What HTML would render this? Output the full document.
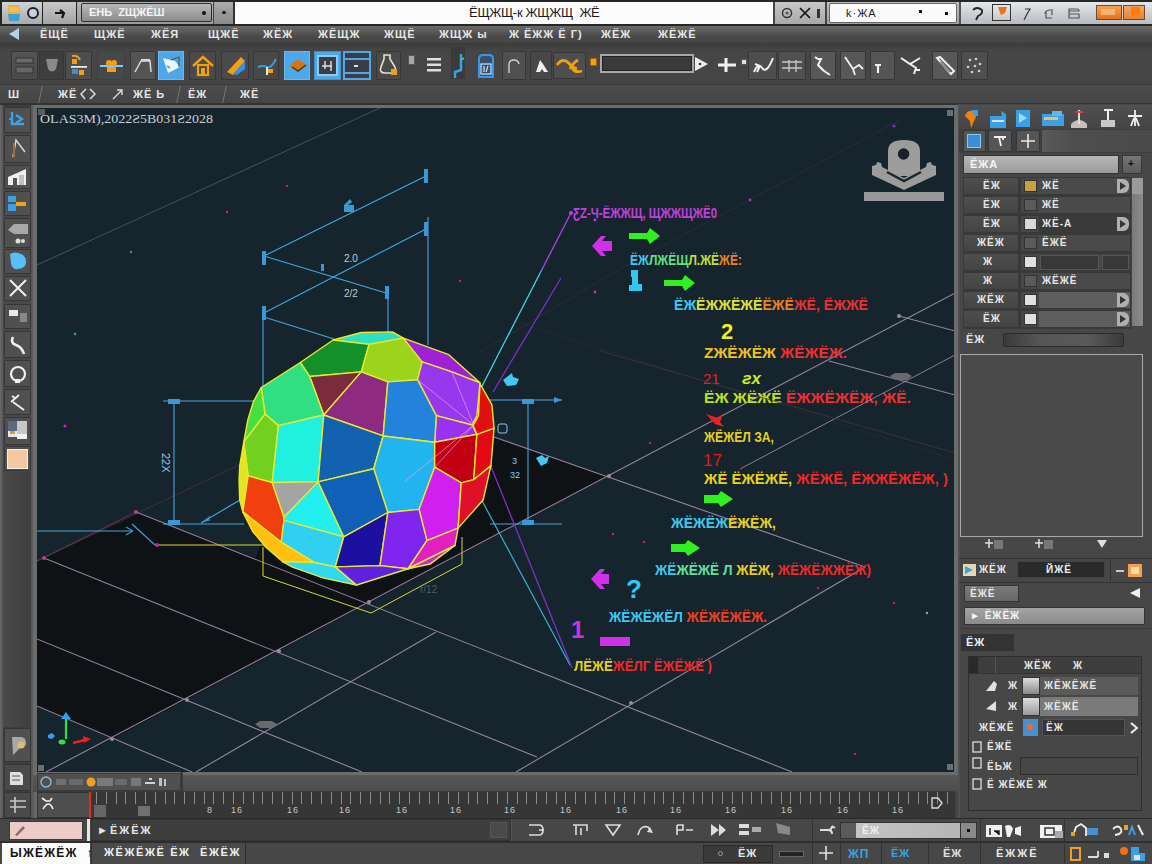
<!DOCTYPE html>
<html><head><meta charset="utf-8">
<style>
*{margin:0;padding:0;box-sizing:border-box}
html,body{width:1152px;height:864px;overflow:hidden;background:#444;font-family:"Liberation Sans",sans-serif;position:relative}
.a{position:absolute}
.t{position:absolute;color:#e6e6e6;font-size:11px;font-weight:bold;white-space:nowrap;line-height:1;letter-spacing:1px;font-family:"Liberation Sans",sans-serif}
.btn{position:absolute;background:linear-gradient(#555,#4a4a4a);border:1px solid #363636;border-radius:1px}
.ic{position:absolute;overflow:visible}
</style></head><body>
<!-- TOP BAR -->
<div class="a" style="left:0;top:0;width:1152px;height:26px;background:#262626"></div>
<div class="a" style="left:2px;top:2px;width:40px;height:22px;background:linear-gradient(#d0d4d8,#a8aaac)"></div>
<svg class="ic" style="left:6px;top:3px" width="16" height="20"><path d="M2,2 h11 l1,9 h-12z" fill="#e8b040"/><path d="M2,11 h12 l-1,7 h-10z" fill="#3aa0d8"/><path d="M3,4 h9 v5 h-9z" fill="#f0c860" opacity=".7"/></svg>
<svg class="ic" style="left:26px;top:6px" width="14" height="14"><circle cx="7" cy="7" r="5" fill="#c8d0d8" stroke="#1a2030" stroke-width="2"/></svg>
<div class="a" style="left:42px;top:2px;width:1px;height:22px;background:#222"></div>
<div class="a" style="left:43px;top:2px;width:33px;height:22px;background:linear-gradient(#c8c8c8,#a4a4a4)"></div>
<svg class="ic" style="left:53px;top:8px" width="14" height="12"><path d="M2,5 h8 M7,2 l4,3 l-2,5" stroke="#151515" stroke-width="2.2" fill="none"/></svg>
<div class="a" style="left:76px;top:2px;width:1px;height:22px;background:#222"></div>
<div class="a" style="left:77px;top:2px;width:156px;height:22px;background:linear-gradient(#b4b4b4,#9a9a9a)"></div>
<div class="a" style="left:81px;top:3px;width:131px;height:19px;background:linear-gradient(#b8b8b8,#8c8c8c);border:1.5px solid #2e2e2e;border-radius:2px"></div>
<div class="t" style="left:89px;top:7px;color:#f4f4f4;font-size:11px;letter-spacing:0px">ЕНЬ &nbsp;ZЩЖЁШ</div>
<div class="a" style="left:202px;top:11px;width:4px;height:4px;border-radius:2px;background:#111"></div>
<div class="a" style="left:213px;top:2px;width:20px;height:22px;background:linear-gradient(#aaa,#8a8a8a);border-left:1px solid #444"></div>
<div class="a" style="left:222px;top:11px;width:4px;height:3px;border-radius:2px;background:#111"></div>
<div class="a" style="left:233px;top:2px;width:2px;height:22px;background:#333"></div>
<div class="a" style="left:235px;top:2px;width:538px;height:22px;background:#fcfcfc"></div>
<div class="t" style="left:469px;top:6px;color:#1a1a1a;font-size:13px;font-weight:normal;letter-spacing:-0.3px">ЁЩЖЩ-к ЖЩЖЩ &nbsp;ЖЁ</div>
<div class="a" style="left:773px;top:2px;width:2px;height:22px;background:#444"></div>
<div class="a" style="left:775px;top:2px;width:50px;height:22px;background:linear-gradient(#c8c8c8,#a8a8a8)"></div>
<svg class="ic" style="left:781px;top:7px" width="50" height="14"><circle cx="6" cy="6" r="4.5" fill="none" stroke="#333" stroke-width="1.5"/><circle cx="6" cy="6" r="1.5" fill="#555"/><path d="M19,1 l10,10 M29,1 l-10,10" stroke="#111" stroke-width="1.6"/><rect x="36" y="2" width="3" height="9" fill="#333"/></svg>
<div class="a" style="left:825px;top:2px;width:2px;height:22px;background:#444"></div>
<div class="a" style="left:827px;top:2px;width:133px;height:22px;background:linear-gradient(#c0c0c0,#a0a0a0)"></div>
<div class="a" style="left:829px;top:3px;width:128px;height:20px;background:#fafafa;border:1px solid #666;border-radius:2px"></div>
<div class="t" style="left:846px;top:8px;color:#222;font-size:11px;font-weight:normal">k·ЖА</div>
<div class="a" style="left:919px;top:10px;width:3px;height:3px;background:#111"></div>
<div class="a" style="left:945px;top:12px;width:3px;height:3px;background:#111"></div>
<div class="a" style="left:959px;top:2px;width:2px;height:22px;background:#555"></div>
<div class="a" style="left:961px;top:2px;width:191px;height:22px;background:linear-gradient(#e4e8ec,#b8bcc0)"></div>
<svg class="ic" style="left:970px;top:6px" width="16" height="16"><path d="M3,4 q4,-4 9,0 q1,4 -4,6 l-2,4" stroke="#222" stroke-width="1.8" fill="none"/></svg>
<div class="a" style="left:992px;top:4px;width:19px;height:17px;background:linear-gradient(#e8e8e8,#c8c8c8);border:1px solid #333"></div>
<svg class="ic" style="left:997px;top:6px" width="12" height="10"><path d="M1,1 h9 l-2,6 l-4,2z" fill="#f07010"/></svg>
<svg class="ic" style="left:1022px;top:6px" width="64" height="16"><path d="M3,3 h5 l-3,5 l-3,6" stroke="#333" stroke-width="1.2" fill="none"/><path d="M23,8 q0,-4 6,-4 M24,5 v7 h6 M30,3 v6" stroke="#555" stroke-width="1.2" fill="none"/><path d="M47,3 h8 q2,0 2,2 h-10 v3 h10 v4 h-10z" stroke="#555" stroke-width="1.2" fill="none"/></svg>
<div class="a" style="left:1096px;top:5px;width:26px;height:15px;background:linear-gradient(#f8a050,#e87018);border:1px solid #6a4a30"></div>
<div class="a" style="left:1101px;top:9px;width:14px;height:6px;background:#f8d0a0;opacity:.6"></div>
<div class="a" style="left:1123px;top:5px;width:22px;height:15px;background:linear-gradient(#f0a868,#e88030);border:1px solid #6a4a30"></div>
<div class="a" style="left:1131px;top:7px;width:9px;height:8px;background:#ff7a10"></div>
<!-- MENU -->
<div class="a" style="left:0;top:24px;width:1152px;height:2px;background:#262626"></div>
<div class="a" style="left:0;top:26px;width:1152px;height:17px;background:linear-gradient(#6a6a6a,#4a4a4a 60%,#444)"></div>
<svg class="ic" style="left:7px;top:27px" width="14" height="14"><path d="M12,1 L2,7 L12,13z" fill="#b8d0e8"/></svg>
<div class="t" style="left:40px;top:29px">ЁЩЁ</div>
<div class="t" style="left:94px;top:29px">ЩЖЁ</div>
<div class="t" style="left:151px;top:29px">ЖЁЯ</div>
<div class="t" style="left:208px;top:29px">ЩЖЁ</div>
<div class="t" style="left:263px;top:29px">ЖЁЖ</div>
<div class="t" style="left:318px;top:29px">ЖЁЩЖ</div>
<div class="t" style="left:384px;top:29px">ЖЩЁ</div>
<div class="t" style="left:439px;top:29px">ЖЩЖ ы</div>
<div class="t" style="left:509px;top:29px">Ж ЁЖЖ Ё Г)</div>
<div class="t" style="left:601px;top:29px">ЖЁЖ</div>
<div class="t" style="left:658px;top:29px">ЖЁЖЁ</div>
<!-- TOOLBAR -->
<div class="a" style="left:0;top:43px;width:1152px;height:41px;background:linear-gradient(#3c3c3c,#464646 20%,#454545)"></div>
<!-- toolbar buttons -->
<div class="btn" style="left:11px;top:51px;width:27px;height:29px;background:linear-gradient(#555,#4a4a4a)"></div>
<svg class="ic" style="left:15px;top:57px" width="20" height="18"><rect x="1" y="1" width="17" height="5" fill="#6a6a6a" stroke="#333"/><rect x="1" y="10" width="17" height="6" fill="#666" stroke="#333"/></svg>
<div class="btn" style="left:39px;top:51px;width:25px;height:29px;background:#3e3e3e"></div>
<svg class="ic" style="left:45px;top:57px" width="14" height="18"><path d="M1,2 h12 l-2,10 q-4,5 -8,0z" fill="#8a8a8a"/></svg>
<div class="btn" style="left:65px;top:51px;width:27px;height:29px;background:#4e4e4e"></div>
<svg class="ic" style="left:68px;top:54px" width="22" height="24"><path d="M4,2 q6,-1 8,4" stroke="#e8a020" stroke-width="2" fill="none"/><rect x="3" y="12" width="16" height="1.8" fill="#e8e8e8"/><rect x="4" y="15" width="6" height="5" fill="#3a90d0"/><rect x="11" y="16" width="5" height="5" fill="#f0a010"/><rect x="4" y="5" width="5" height="5" fill="#f0a010"/></svg>
<div class="btn" style="left:97px;top:51px;width:28px;height:29px;background:#484848;border-color:#404040"></div>
<svg class="ic" style="left:99px;top:58px" width="26" height="18"><rect x="1" y="7" width="23" height="2" fill="#8ac8f0"/><circle cx="10" cy="5" r="3" fill="#f0a010"/><circle cx="15" cy="5" r="3" fill="#f0a010"/><rect x="8" y="9" width="9" height="5" fill="#f0a010"/></svg>
<div class="btn" style="left:130px;top:51px;width:26px;height:29px;background:#545454"></div>
<svg class="ic" style="left:133px;top:57px" width="22" height="18"><path d="M2,15 l6,-11 h9 l1,11" stroke="#d8d8d8" stroke-width="1.5" fill="none"/><rect x="8" y="2" width="9" height="2" fill="#d8d8d8"/></svg>
<div class="a" style="left:158px;top:51px;width:26px;height:29px;background:#4ca8e8;border:1px solid #6ab8f0"></div>
<svg class="ic" style="left:161px;top:54px" width="22" height="24"><path d="M2,4 l12,3 l5,6 l-12,6z" fill="#f0f4f8"/><path d="M10,6 l8,-3 v10" stroke="#555" stroke-width="1.2" fill="none"/><path d="M6,12 l3,2" stroke="#4ca8e8" stroke-width="2"/></svg>
<div class="btn" style="left:189px;top:51px;width:27px;height:29px;background:#4a4a4a"></div>
<svg class="ic" style="left:191px;top:54px" width="24" height="24"><path d="M2,12 l10,-9 l10,9" stroke="#f0a010" stroke-width="2.5" fill="none"/><rect x="7" y="11" width="10" height="10" fill="none" stroke="#f0a010" stroke-width="2.2"/><rect x="10" y="14" width="4" height="7" fill="#f0a010"/></svg>
<div class="btn" style="left:221px;top:51px;width:28px;height:29px;background:#4a4a4a"></div>
<svg class="ic" style="left:224px;top:54px" width="24" height="24"><path d="M3,18 l14,-15 l4,4 l-12,14z" fill="#f0a010"/><path d="M9,20 l12,-13 v8 l-8,6z" fill="#3a90e0"/></svg>
<div class="btn" style="left:253px;top:51px;width:26px;height:29px;background:#484848"></div>
<svg class="ic" style="left:255px;top:55px" width="24" height="22"><path d="M3,12 q6,-2 9,0 q4,2 9,-8" stroke="#3a98e0" stroke-width="2" fill="none"/><rect x="11" y="12" width="2" height="8" fill="#e8e8e8"/><rect x="13" y="14" width="5" height="4" fill="#f0a010"/></svg>
<div class="a" style="left:284px;top:51px;width:26px;height:29px;background:#4ca8e8;border:1px solid #6ab8f0"></div>
<svg class="ic" style="left:287px;top:56px" width="22" height="20"><path d="M2,10 l9,-7 l9,6 l-9,7z" fill="#d07818"/><path d="M5,11 l6,4 l8,-6" stroke="#5a3010" stroke-width="1.5" fill="none"/></svg>
<div class="a" style="left:314px;top:51px;width:27px;height:29px;background:#4ca8e8;border:1px solid #3a90d0"></div>
<div class="a" style="left:317px;top:55px;width:21px;height:21px;background:#3a3e44;border:2px solid #90c8f0"></div>
<svg class="ic" style="left:320px;top:58px" width="16" height="16"><path d="M2,8 h10 M5,3 v8 M11,3 v10" stroke="#e0e0e0" stroke-width="1.4"/></svg>
<div class="a" style="left:343px;top:51px;width:28px;height:29px;background:#3a3e44;border:2px solid #4ca8e8"></div>
<div class="a" style="left:343px;top:58px;width:28px;height:2px;background:#4ca8e8"></div>
<div class="a" style="left:343px;top:72px;width:28px;height:2px;background:#4ca8e8"></div>
<div class="a" style="left:354px;top:65px;width:4px;height:2px;background:#e0e0e0"></div>
<div class="btn" style="left:376px;top:51px;width:25px;height:29px;background:#4a4a4a"></div>
<svg class="ic" style="left:378px;top:53px" width="22" height="26"><path d="M6,2 h6 v4 l5,8 q2,6 -4,6 h-6 q-6,0 -4,-6 l3,-8z" stroke="#e8e0c8" stroke-width="1.6" fill="none"/><rect x="13" y="16" width="6" height="6" fill="#e8a020"/></svg>
<div class="a" style="left:408px;top:55px;width:7px;height:10px;background:#a8a8a8;border:1px solid #555;border-radius:1px"></div>
<svg class="ic" style="left:426px;top:56px" width="18" height="18"><rect x="1" y="2" width="14" height="2.5" fill="#e0e0e0"/><rect x="1" y="7.5" width="14" height="2.5" fill="#e0e0e0"/><rect x="1" y="13" width="14" height="2.5" fill="#e0e0e0"/></svg>
<div class="a" style="left:451px;top:47px;width:14px;height:32px;background:#3a3a3a"></div>
<svg class="ic" style="left:451px;top:50px" width="16" height="30"><path d="M10,4 v16 l-6,2 v6" stroke="#3aa0e8" stroke-width="2.5" fill="none"/><path d="M10,10 l3,-2" stroke="#50d050" stroke-width="2"/></svg>
<svg class="ic" style="left:477px;top:53px" width="18" height="26"><path d="M2,24 v-18 q0,-4 4,-4 h6 q4,0 4,4 v18z" fill="#3a5068" stroke="#3a98e8" stroke-width="2"/><rect x="4" y="11" width="10" height="10" fill="none" stroke="#a8d8f8" stroke-width="1.4"/><path d="M7,13 v6 M11,13 l-2,6" stroke="#c8e8f8" stroke-width="1.2"/></svg>
<div class="btn" style="left:502px;top:51px;width:24px;height:29px;background:#505050"></div>
<svg class="ic" style="left:505px;top:57px" width="18" height="18"><path d="M4,16 v-8 q0,-5 5,-5 q4,0 5,4" stroke="#d0d0d0" stroke-width="1.4" fill="none"/></svg>
<div class="btn" style="left:530px;top:51px;width:22px;height:29px;background:#484848"></div>
<svg class="ic" style="left:533px;top:57px" width="18" height="18"><path d="M3,15 l4,-12 l3,4 l5,8 h-4 l-2,-3 l-2,3z" fill="#f0f0f0"/></svg>
<div class="btn" style="left:553px;top:52px;width:33px;height:27px;background:#4e4e4e"></div>
<svg class="ic" style="left:555px;top:56px" width="30" height="20"><path d="M2,9 q4,-6 9,-4 q5,3 7,8 q2,4 9,2 M15,13 q3,-6 8,-9 M16,10 l6,3" stroke="#f0a010" stroke-width="2.8" fill="none"/></svg>
<div class="a" style="left:590px;top:58px;width:7px;height:8px;background:#f0a010;border:1px solid #a06010"></div>
<div class="a" style="left:600px;top:54px;width:94px;height:19px;background:#3a3a3a;border:2px solid #a8a8a8;box-shadow:inset 0 0 0 1px #222"></div>
<svg class="ic" style="left:694px;top:56px" width="16" height="16"><path d="M1,1 L14,8 L1,15z" fill="#f0f0f0"/><circle cx="6" cy="8" r="1.3" fill="#333"/></svg>
<svg class="ic" style="left:717px;top:57px" width="20" height="16"><path d="M1,8 h18 M9,1 v14" stroke="#f0f0f0" stroke-width="3"/></svg>
<div class="a" style="left:741px;top:59px;width:6px;height:6px;background:#e0e0e0;border:1px solid #555"></div>
<div class="btn" style="left:748px;top:51px;width:29px;height:29px;background:#4e4e4e"></div>
<svg class="ic" style="left:751px;top:56px" width="24" height="20"><path d="M3,16 q4,-10 9,-3 q4,4 10,-11 M4,8 l5,2 l-3,6" stroke="#f0f0f0" stroke-width="2" fill="none"/></svg>
<div class="btn" style="left:778px;top:51px;width:28px;height:29px;background:#505050"></div>
<svg class="ic" style="left:781px;top:59px" width="22" height="14"><path d="M1,3 h20 M1,9 h20 M8,1 v12 M15,1 v12" stroke="#c8c8c8" stroke-width="1.3"/></svg>
<div class="btn" style="left:810px;top:51px;width:26px;height:29px;background:#585858"></div>
<svg class="ic" style="left:812px;top:54px" width="22" height="24"><path d="M3,3 l3,2 l3,0 l-3,6 q5,6 12,10" stroke="#f0f0f0" stroke-width="2" fill="none"/></svg>
<div class="btn" style="left:840px;top:51px;width:26px;height:29px;background:#585858"></div>
<svg class="ic" style="left:842px;top:54px" width="22" height="24"><path d="M3,3 l8,12 l2,6 M11,15 l6,-4 l4,4" stroke="#f0f0f0" stroke-width="1.8" fill="none"/></svg>
<div class="btn" style="left:870px;top:51px;width:25px;height:29px;background:#555"></div>
<svg class="ic" style="left:872px;top:59px" width="22" height="18"><path d="M3,6 h6 M6,6 v8" stroke="#f0f0f0" stroke-width="2.2"/></svg>
<svg class="ic" style="left:899px;top:54px" width="26" height="24"><path d="M2,4 l9,6 l10,-6 M11,10 l6,4 l-2,6 M16,16 l5,0" stroke="#f0f0f0" stroke-width="2" fill="none"/></svg>
<div class="btn" style="left:932px;top:51px;width:26px;height:29px;background:#585858"></div>
<svg class="ic" style="left:934px;top:54px" width="24" height="24"><path d="M3,4 l3,-1 l14,14 l-3,3z" fill="none" stroke="#f0f0f0" stroke-width="2"/><path d="M6,8 l10,10" stroke="#888" stroke-width="2"/></svg>
<div class="btn" style="left:961px;top:51px;width:27px;height:29px;background:#4e4e4e"></div>
<svg class="ic" style="left:964px;top:56px" width="22" height="20"><g fill="#d0d0d0"><circle cx="6" cy="4" r="1.3"/><circle cx="12" cy="3" r="1.3"/><circle cx="16" cy="8" r="1.3"/><circle cx="4" cy="11" r="1.3"/><circle cx="11" cy="10" r="1.3"/><circle cx="8" cy="16" r="1.3"/><circle cx="15" cy="15" r="1.3"/></g></svg>
<!-- sub bar -->
<div class="a" style="left:0;top:84px;width:1152px;height:20px;background:linear-gradient(#4c4c4c,#444)"></div>
<div class="a" style="left:0;top:84px;width:1152px;height:1px;background:#3a3a3a"></div>
<div class="t" style="left:8px;top:89px">Ш</div>
<div class="a" style="left:40px;top:86px;width:1px;height:17px;background:#777;transform:skewX(-12deg)"></div>
<div class="t" style="left:58px;top:89px">ЖЁ</div>
<svg class="ic" style="left:80px;top:88px" width="16" height="12"><path d="M6,1 l-5,5 l4,5 M10,1 l5,5 l-5,5" stroke="#ddd" stroke-width="1.5" fill="none"/></svg>
<svg class="ic" style="left:112px;top:88px" width="12" height="12"><path d="M1,11 l9,-9 M5,2 h5 v5" stroke="#ddd" stroke-width="1.4" fill="none"/></svg>
<div class="t" style="left:133px;top:89px">ЖЁ Ь</div>
<div class="a" style="left:178px;top:86px;width:1px;height:17px;background:#777;transform:skewX(-12deg)"></div>
<div class="t" style="left:188px;top:89px">ЁЖ</div>
<div class="a" style="left:224px;top:86px;width:1px;height:17px;background:#777;transform:skewX(-12deg)"></div>
<div class="t" style="left:240px;top:89px">ЖЁ</div>
<div class="a" style="left:0;top:103px;width:1152px;height:2px;background:#333"></div>
<div class="a" style="left:0;top:105px;width:1152px;height:3px;background:#5a5a5a"></div>
<div class="a" style="left:0;top:108px;width:1152px;height:1px;background:#3a3a3a"></div>
<!-- LEFT TOOLBAR -->
<div class="a" style="left:0;top:105px;width:37px;height:715px;background:#3e3e3e"></div>
<div class="a" style="left:0;top:105px;width:3px;height:715px;background:linear-gradient(90deg,#6a6a6a,#555)"></div>
<div class="a" style="left:31px;top:105px;width:6px;height:715px;background:linear-gradient(90deg,#555,#6e6e6e)"></div>
<div class="a" style="left:3px;top:107px;width:28px;height:365px;background:#484848"></div>
<div class="a" style="left:3px;top:472px;width:28px;height:255px;background:linear-gradient(90deg,#4a4a4a,#3e3e3e)"></div>
<!-- buttons -->
<div class="btn" style="left:4px;top:107px;width:27px;height:26px;background:#505050"></div>
<svg class="ic" style="left:8px;top:110px" width="20" height="20"><path d="M4,2 v12 h12 M8,5 l6,4 l-6,4" stroke="#3aa0e8" stroke-width="2.4" fill="none"/><rect x="1" y="8" width="4" height="2" fill="#3aa0e8"/></svg>
<div class="btn" style="left:4px;top:135px;width:27px;height:28px;background:#505050"></div>
<svg class="ic" style="left:8px;top:137px" width="20" height="24"><path d="M5,20 l3,-17 l9,12" stroke="#d8d8d8" stroke-width="1.5" fill="none"/><path d="M6,6 v14" stroke="#a07040" stroke-width="2"/></svg>
<div class="btn" style="left:4px;top:165px;width:27px;height:24px;background:#505050"></div>
<svg class="ic" style="left:7px;top:167px" width="22" height="20"><path d="M1,10 l18,-8 v16 h-18z" fill="#f0f0f0"/><path d="M6,11 h4 v7 h-4z" fill="#555"/><path d="M12,8 h5 v10 h-5z" fill="#c0c0c0"/></svg>
<div class="btn" style="left:4px;top:191px;width:27px;height:25px;background:#505050"></div>
<svg class="ic" style="left:7px;top:194px" width="22" height="20"><rect x="1" y="2" width="8" height="6" fill="#3aa0e8"/><rect x="1" y="10" width="8" height="7" fill="#3aa0e8"/><rect x="9" y="8" width="10" height="4" fill="#f0a010"/></svg>
<div class="btn" style="left:4px;top:218px;width:27px;height:30px;background:#505050"></div>
<svg class="ic" style="left:6px;top:220px" width="24" height="26"><path d="M2,10 l6,-6 h14 v10 h-14z" fill="#a8a8a8"/><circle cx="12" cy="21" r="2.5" fill="#e0e0e0"/><circle cx="17" cy="21" r="2" fill="#e0e0e0"/></svg>
<div class="btn" style="left:4px;top:249px;width:27px;height:25px;background:#505050"></div>
<svg class="ic" style="left:7px;top:250px" width="22" height="22"><path d="M3,4 q5,-3 11,0 q5,2 5,8 q0,6 -8,7 q-6,1 -7,-6z" fill="#58c0f8"/></svg>
<div class="btn" style="left:4px;top:276px;width:27px;height:25px;background:#505050"></div>
<svg class="ic" style="left:8px;top:278px" width="20" height="20"><path d="M2,2 l16,16 M18,2 l-16,16" stroke="#f0f0f0" stroke-width="2"/></svg>
<div class="btn" style="left:4px;top:304px;width:27px;height:25px;background:#505050"></div>
<svg class="ic" style="left:7px;top:307px" width="22" height="20"><rect x="2" y="3" width="9" height="6" fill="#e8e8e8"/><rect x="13" y="6" width="7" height="9" fill="#888"/></svg>
<div class="btn" style="left:4px;top:331px;width:27px;height:27px;background:#505050"></div>
<svg class="ic" style="left:7px;top:333px" width="22" height="24"><path d="M6,4 q-3,6 3,8 q6,2 8,9" stroke="#f0f0f0" stroke-width="2.6" fill="none"/></svg>
<div class="btn" style="left:4px;top:360px;width:27px;height:27px;background:#505050"></div>
<svg class="ic" style="left:7px;top:362px" width="22" height="24"><circle cx="11" cy="12" r="7" stroke="#f0f0f0" stroke-width="2.2" fill="none"/><rect x="8" y="17" width="5" height="4" fill="#f0f0f0"/></svg>
<div class="btn" style="left:4px;top:389px;width:27px;height:26px;background:#505050"></div>
<svg class="ic" style="left:8px;top:391px" width="20" height="22"><path d="M3,11 l8,-7 M5,11 l11,8 M4,5 l3,2" stroke="#f0f0f0" stroke-width="1.8" fill="none"/></svg>
<div class="btn" style="left:4px;top:417px;width:27px;height:28px;background:#505050"></div>
<svg class="ic" style="left:7px;top:419px" width="22" height="24"><rect x="1" y="2" width="9" height="10" fill="#5a6a80"/><rect x="10" y="2" width="10" height="13" fill="#c8c8c8"/><rect x="1" y="12" width="9" height="6" fill="#e8e8e8"/><rect x="3" y="12" width="5" height="3" fill="#c8a040"/><rect x="10" y="15" width="10" height="5" fill="#f0f0f0"/></svg>
<div class="btn" style="left:4px;top:446px;width:27px;height:25px;background:#505050"></div>
<div class="a" style="left:7px;top:449px;width:21px;height:20px;background:#f4c8a0;border:1.5px solid #f4f0ec"></div>
<div class="a" style="left:4px;top:728px;width:27px;height:34px;background:#505050;border:1px solid #363636"></div>
<svg class="ic" style="left:8px;top:735px" width="20" height="22"><path d="M4,2 h9 q5,0 5,6 q0,5 -6,5 l-7,7z" fill="#a8a8a8"/><circle cx="13" cy="10" r="3.5" fill="#d8c070"/></svg>
<div class="btn" style="left:4px;top:764px;width:27px;height:27px;background:#4a4a4a"></div>
<svg class="ic" style="left:8px;top:768px" width="20" height="20"><path d="M2,4 l10,0 l3,3 v10 h-13z" fill="#e0e0e0"/><path d="M4,8 h8 M4,12 h8" stroke="#555"/></svg>
<div class="btn" style="left:4px;top:792px;width:27px;height:26px;background:#4a4a4a"></div>
<svg class="ic" style="left:8px;top:795px" width="20" height="20"><path d="M2,6 h16 M2,12 h16 M7,2 v16" stroke="#c8c8c8" stroke-width="1.6" fill="none"/></svg>
<!-- VIEWPORT -->
<div class="a" style="left:33px;top:105px;width:925px;height:670px;background:#6c6c6c"></div>
<div class="a" style="left:37px;top:108px;width:917px;height:664px;background:#15242d;overflow:hidden">
<svg width="917" height="664" viewBox="37 108 917 664" style="position:absolute;left:0;top:0">
<defs>
<linearGradient id="pc" x1="0" y1="0" x2="0" y2="1"><stop offset="0" stop-color="#b040e8"/><stop offset="0.3" stop-color="#b040e8"/><stop offset="0.35" stop-color="#40d8e0"/><stop offset="1" stop-color="#40d8e0"/></linearGradient>
</defs>
<!-- ground black -->
<polygon points="37,561 136,512 256,558 300,420 494,437 609,476 112,739 37,706" fill="#0f1215"/>
<!-- faint lines -->
<g stroke="#6c6478" stroke-width="1" fill="none" opacity="0.7">
<line x1="37" y1="265" x2="382" y2="107" stroke="#5a6672"/>
<line x1="37" y1="561" x2="260" y2="455" stroke="#5a3048"/>
<line x1="480" y1="352" x2="625" y2="266" stroke="#3a2c44"/>
<line x1="625" y1="266" x2="900" y2="120" stroke="#3a2c44"/>
<line x1="516" y1="322" x2="955" y2="460" stroke="#2e2a3c"/>
</g>
<g stroke="#c0a0c8" stroke-width="1.1" fill="none" opacity="0.75">
<line x1="37" y1="561" x2="136" y2="512" stroke="#704060"/>
<line x1="136" y1="512" x2="792" y2="772"/>
<line x1="44" y1="558" x2="537" y2="757"/>
<line x1="37" y1="639" x2="362" y2="772"/>
<line x1="37" y1="706" x2="192" y2="772"/>
<line x1="46" y1="772" x2="955" y2="293"/>
<line x1="196" y1="772" x2="436" y2="632"/>
<line x1="516" y1="772" x2="865" y2="567"/>
<line x1="494" y1="437" x2="865" y2="567"/>
<line x1="829" y1="361" x2="955" y2="395"/>
<line x1="899" y1="316" x2="955" y2="331"/>
</g>
<g fill="#9a8aa0">
<circle cx="609" cy="476" r="2"/><circle cx="369" cy="602" r="2"/><circle cx="279" cy="651" r="2"/><circle cx="187" cy="700" r="2"/><circle cx="112" cy="739" r="2"/><circle cx="899" cy="316" r="2"/><circle cx="631" cy="703" r="2"/>
</g>
<circle cx="136" cy="512" r="2" fill="#c04080"/>
<circle cx="44" cy="558" r="2" fill="#c04080"/>
<!-- stars -->
<g fill="#c03030"><circle cx="287" cy="186" r="1.2"/><circle cx="227" cy="212" r="1.2"/><circle cx="460" cy="281" r="1.2"/><circle cx="650" cy="443" r="1.2"/><circle cx="644" cy="542" r="1.2"/><circle cx="613" cy="534" r="1.2"/><circle cx="818" cy="588" r="1.2"/><circle cx="894" cy="603" r="1.2"/><circle cx="855" cy="754" r="1.2"/><circle cx="720" cy="430" r="1.2"/></g>
<g fill="#3080c0"><circle cx="131" cy="252" r="1.3"/><circle cx="75" cy="334" r="1.3" fill="#40a0a0"/></g>
<circle cx="927" cy="613" r="1.2" fill="#a0a8b0"/>
<circle cx="65" cy="426" r="1.6" fill="#c020c0"/>
<circle cx="595" cy="220" r="1.4" fill="#c040c0"/>
<circle cx="750" cy="200" r="1.4" fill="#a040b0"/>
<circle cx="595" cy="292" r="1.4" fill="#a040b0"/>
<!-- dimension lines blue -->
<g stroke="#44a6de" stroke-width="1.1" fill="none">
<line x1="264" y1="256" x2="426" y2="176"/>
<line x1="264" y1="313" x2="426" y2="229"/>
<line x1="264" y1="256" x2="386" y2="293"/>
<line x1="264" y1="317" x2="334" y2="339"/>
<line x1="428" y1="217" x2="428" y2="345"/>
<line x1="388" y1="287" x2="388" y2="334"/>
<line x1="263" y1="313" x2="263" y2="420"/>
<line x1="163" y1="401" x2="265" y2="401"/>
<line x1="488" y1="400" x2="562" y2="400"/>
<line x1="163" y1="524" x2="244" y2="524"/>
<line x1="490" y1="524" x2="562" y2="524"/>
<line x1="174" y1="401" x2="174" y2="524"/>
<line x1="528" y1="401" x2="528" y2="524"/>
<line x1="201" y1="523" x2="267" y2="484"/>
<line x1="37" y1="531" x2="133" y2="531"/>
<line x1="132" y1="524" x2="155" y2="545"/>
</g>
<g fill="#3a98d4">
<rect x="262" y="251" width="4" height="14"/><rect x="262" y="306" width="4" height="14"/>
<rect x="424" y="169" width="4" height="14"/><rect x="424" y="222" width="4" height="14"/>
<rect x="385" y="286" width="4" height="13"/>
<rect x="168" y="399" width="12" height="5"/><rect x="168" y="520" width="12" height="5"/>
<rect x="522" y="399" width="12" height="5"/><rect x="522" y="520" width="12" height="5"/>
<path d="M344,205 l6,-6 l2,3 l-4,3 l6,0 l0,7 l-10,0z"/>
<path d="M201,523 l10,-3 l-3,-1 l3,-4z"/>
<path d="M562,400 l-8,-3 l0,6z"/>
<path d="M133,531 l-7,-4 M133,531 l-7,4" stroke="#3a98d4" stroke-width="1.2"/>
<rect x="321" y="264" width="3" height="7"/>
</g>
<g fill="#40c8f0">
<path d="M503,380 l9,-7 l1,4 l6,2 l-3,6 l-9,1z"/>
<path d="M536,458 l6,-3 l3,3 l4,-2 l-2,7 l-6,3z"/>
</g>
<text x="344" y="262" fill="#bcd0dc" font-size="10" font-family="Liberation Sans">2.0</text>
<text x="344" y="297" fill="#bcd0dc" font-size="10" font-family="Liberation Sans">2/2</text>
<text x="156" y="459" fill="#8cc8e8" font-size="11" font-family="Liberation Sans" transform="rotate(90 162 459)">22X</text>
<text x="512" y="464" fill="#8cc8e8" font-size="9" font-family="Liberation Sans">3</text>
<text x="510" y="478" fill="#8cc8e8" font-size="9" font-family="Liberation Sans">32</text>
<rect x="498" y="424" width="9" height="9" rx="2" fill="none" stroke="#8cc8e8" stroke-width="1"/>
<!-- purple/cyan leader lines -->
<line x1="571" y1="213" x2="479" y2="392" stroke="url(#pc)" stroke-width="1.3"/>
<line x1="561" y1="278" x2="493" y2="392" stroke="#8030c8" stroke-width="1.3"/>
<line x1="480" y1="497" x2="570" y2="665" stroke="#30b8d0" stroke-width="1.2"/>
<line x1="488" y1="459" x2="572" y2="668" stroke="#8030c8" stroke-width="1.3"/>
<circle cx="571" cy="213" r="2" fill="#c040e0"/>
<!-- yellow lines -->
<g stroke="#d8d830" stroke-width="1" fill="none">
<line x1="158" y1="545" x2="267" y2="545"/>
<polyline points="263,547 263,576 371,613 462,564 462,537"/>
</g>
<circle cx="157" cy="545" r="2" fill="#c03080"/>
<text x="420" y="593" fill="#4a6070" font-size="10" font-family="Liberation Sans">r/12</text>
<g transform="translate(230,325) scale(0.3125)" stroke="#e8e830" stroke-width="4.5" stroke-linejoin="round">
<polygon fill="#2ee0c0" points="330,48 420,24 520,22 555,42 445,62"/>
<polygon fill="#13902a" points="225,120 330,48 445,62 420,150 255,165"/>
<polygon fill="#9cd41c" points="445,62 555,42 615,118 600,175 505,182 420,150"/>
<polygon fill="#a020d8" points="555,42 700,95 800,185 710,150 615,118"/>
<polygon fill="#9838ee" points="615,118 710,150 800,185 790,290 775,320 660,290 600,175"/>
<polygon fill="#9a30f0" points="660,290 775,320 790,350 655,375"/>
<polygon fill="#7a2c3c" points="255,165 420,150 300,288"/>
<polygon fill="#8e2a82" points="420,150 505,182 490,355 300,288"/>
<polygon fill="#2282dc" points="505,182 600,175 660,290 655,375 490,355"/>
<polygon fill="#30e080" points="100,200 225,120 255,165 300,288 155,322 112,285"/>
<polygon fill="#44e040" points="44,375 112,285 100,200 75,245 57,304"/>
<polygon fill="#72d020" points="112,285 155,322 135,504 58,483 44,375"/>
<polygon fill="#e4e420" points="44,375 58,483 41,598 31,560 29,496 31,451"/>
<polygon fill="#20f0e0" points="155,322 300,288 282,502 135,504"/>
<polygon fill="#1262b0" points="300,288 490,355 460,460 282,502"/>
<polygon fill="#22b4f0" points="490,355 655,375 655,455 605,590 505,600 460,460"/>
<polygon fill="#c00010" points="655,375 790,350 780,495 740,505 655,455"/>
<polygon fill="#e40a14" points="790,350 845,330 835,450 780,495"/>
<polygon fill="#e01010" points="800,188 838,255 845,330 790,350 778,322 795,290"/>
<polygon fill="#d020f0" points="655,455 740,505 730,650 630,690 605,590"/>
<polygon fill="#e01028" points="740,505 780,495 835,450 810,560 730,650"/>
<polygon fill="#f04010" points="58,483 135,504 173,615 173,625 164,695 41,598"/>
<polygon fill="#a4a4a4" points="135,504 282,502 173,615"/>
<polygon fill="#22f0f0" points="282,502 364,678 173,625 173,615"/>
<polygon fill="#1060b8" points="282,502 460,460 505,600 364,678"/>
<polygon fill="#30d0f2" points="173,625 364,678 337,774 270,760 164,695"/>
<polygon fill="#1c10a0" points="364,678 505,600 480,770 337,774"/>
<polygon fill="#8024f0" points="505,600 605,590 630,690 570,780 480,770"/>
<polygon fill="#e020c0" points="630,690 730,650 720,705 570,780"/>
<polygon fill="#ffc010" points="41,598 164,695 270,760 168,757 115,711 72,660"/>
<polygon fill="#30d8f0" points="168,757 270,760 337,774 405,832 300,810 200,775"/>
<polygon fill="#6020e0" points="337,774 480,770 570,780 405,832"/>
<polygon fill="#c030d0" points="570,780 720,705 640,765"/>
</g>
<g transform="translate(230,325) scale(0.3125)" stroke="#f0a0f0" stroke-width="3" fill="none" opacity="0.7">
<line x1="780" y1="320" x2="600" y2="175"/><line x1="780" y1="320" x2="655" y2="455"/><line x1="780" y1="320" x2="710" y2="150"/><line x1="780" y1="320" x2="560" y2="500"/>
</g>
<g font-family="Liberation Sans" font-weight="bold" font-size="14">
<text x="40" y="123" fill="#c8d0d8" font-weight="normal" font-size="13" font-family="Liberation Serif" textLength="173" lengthAdjust="spacingAndGlyphs">OLAS3M),2022Ƨ5B031Ƨ2028</text>
<text x="573" y="218" textLength="144" lengthAdjust="spacingAndGlyphs" fill="#c040e0">ƸZ-Ч-ЁЖЖЩ, <tspan>ЩЖЖЩЖЁ0</tspan></text>
<path d="M629,233 h18 l3,-5 l10,8 l-10,8 l-3,-5 h-18z" fill="#30f020"/>
<path d="M612,241 h-10 l4,-5 h-5 l-9,10 l9,10 h5 l-4,-5 h10z" fill="#d030e8"/>
<text x="630" y="265" textLength="112" lengthAdjust="spacingAndGlyphs"><tspan fill="#40c8f0">ЁЖ</tspan><tspan fill="#60e080">ЛЖЁЩ</tspan><tspan fill="#c0e040">Л.ЖЁ</tspan><tspan fill="#f08020">ЖЁ:</tspan></text>
<path d="M631,270 h7 v14 h4 v7 h-13 v-6 h3 v-8 h-1z" fill="#30c8f0"/>
<path d="M664,280 h18 l3,-5 l10,8 l-10,8 l-3,-5 h-18z" fill="#30f020"/>
<text x="674" y="310" textLength="194" lengthAdjust="spacingAndGlyphs"><tspan fill="#40c8f0">ЁЖ</tspan><tspan fill="#e0e040">ЁЖЖЁЖЁ</tspan><tspan fill="#f08020">ЁЖЁ</tspan><tspan fill="#f03030">ЖЁ, ЁЖЖЁ</tspan></text>
<text x="721" y="339" fill="#f0f020" font-size="22" font-weight="bold">2</text>
<text x="704" y="358" textLength="143" lengthAdjust="spacingAndGlyphs"><tspan fill="#f0c020">ZЖЁЖЁЖ</tspan><tspan fill="#f03030"> ЖЁЖЁЖ.</tspan></text>
<text x="703" y="384" fill="#f02020" font-size="15" font-weight="normal">21</text>
<text x="742" y="384" fill="#c8f020" font-size="17" font-style="italic">ƨx</text>
<text x="704" y="403" textLength="207" lengthAdjust="spacingAndGlyphs"><tspan fill="#c0e020">ЁЖ ЖЁЖЁ</tspan><tspan fill="#f03030"> ЁЖЖЁЖЁЖ, ЖЁ.</tspan></text>
<path d="M706,414 l12,4 l5,-4 l-3,8 l4,5 l-9,-3z" fill="#f02020"/>
<text x="704" y="442" textLength="70" lengthAdjust="spacingAndGlyphs" fill="#e8d020">ЖЁЖЁЛ ЗА,</text>
<text x="703" y="466" fill="#e01818" font-size="17" font-weight="normal">17</text>
<text x="704" y="484" textLength="244" lengthAdjust="spacingAndGlyphs"><tspan fill="#e8d020">ЖЁ ЁЖЁЖЁ,</tspan><tspan fill="#f02828"> ЖЁЖЁ, ЁЖЖЁЖЁЖ, )</tspan></text>
<path d="M704,495 h14 l3,-4 l12,8 l-12,8 l-3,-4 h-14z" fill="#30f020"/>
<text x="671" y="528" textLength="105" lengthAdjust="spacingAndGlyphs"><tspan fill="#40c8f0">ЖЁЖЁЖ</tspan><tspan fill="#e8d020">ЁЖЁЖ,</tspan></text>
<path d="M671,544 h14 l3,-4 l12,8 l-12,8 l-3,-4 h-14z" fill="#30f020"/>
<text x="655" y="575" textLength="216" lengthAdjust="spacingAndGlyphs"><tspan fill="#40c8f0">ЖЁ</tspan><tspan fill="#60e0a0">ЖЁЖЁ Л </tspan><tspan fill="#e8d020">ЖЁЖ, </tspan><tspan fill="#f02828">ЖЁЖЁЖЖЁЖ)</tspan></text>
<path d="M609,574 h-8 l4,-5 h-5 l-9,10 l9,10 h5 l-4,-5 h8z" fill="#d030e8"/>
<text x="626" y="598" fill="#30c8f0" font-size="26" font-weight="bold">?</text>
<text x="571" y="638" fill="#d030e8" font-size="24" font-weight="bold">1</text>
<rect x="600" y="637" width="30" height="9" fill="#d030e8"/>
<text x="609" y="622" textLength="158" lengthAdjust="spacingAndGlyphs"><tspan fill="#40c8f0">ЖЁЖЁЖЁЛ </tspan><tspan fill="#f04020">ЖЁЖЁЖЁЖ.</tspan></text>
<text x="574" y="671" textLength="138" lengthAdjust="spacingAndGlyphs"><tspan fill="#e8d020">ЛЁЖЁ</tspan><tspan fill="#f02828">ЖЁЛГ ЁЖЁЖЁ )</tspan></text>
</g>
<!-- gizmo -->
<g fill="#9c9c9c">
<path d="M888,176 L888,151 Q888,140 904,140 Q920,140 920,151 L920,176z"/>
<path d="M872,166 l4,-1 l1,-3 l4,1 l1,4 l22,11 l22,-11 l1,-4 l4,-1 l1,3 l4,1 l0,9 l-32,15 l-32,-15z"/>
<rect x="864" y="192" width="80" height="9" fill="#989898"/>
</g>
<circle cx="903.6" cy="154" r="5.7" fill="#1a2028"/>
<polyline points="887,172 904,181 921,172" fill="none" stroke="#1e262c" stroke-width="2.5"/>
<circle cx="894" cy="126" r="1.6" fill="#8030c0"/>
<!-- axis tripod -->
<g>
<line x1="66" y1="739" x2="66" y2="718" stroke="#30e040" stroke-width="2.2"/>
<path d="M61,719 l5,-7 l5,7z" fill="#30a0f0"/>
<ellipse cx="62" cy="742" rx="3.5" ry="2.5" fill="#30e040"/>
<line x1="73" y1="743" x2="85" y2="740" stroke="#f02020" stroke-width="2.5"/>
<path d="M83,736 l8,3 l-7,4z" fill="#f02020"/>
<path d="M48,735 l4,-2 l3,3 l-3,3 l-4,-1z" fill="#30a0f0"/>
</g>
<rect x="38" y="765" width="6" height="6" fill="#6a6e72"/>
<rect x="38" y="109" width="7" height="6" fill="#5a5e62"/>
<line x1="740" y1="469" x2="955" y2="355" stroke="#c0a0c8" stroke-width="1" opacity="0.7"/>
<line x1="600" y1="351" x2="955" y2="453" stroke="#503040" stroke-width="1" opacity="0.8"/>
<rect x="947" y="110" width="6" height="6" fill="#6a6e72"/>
<rect x="947" y="764" width="6" height="6" fill="#6a6e72"/>
<path d="M255,724 l5,-3 l12,0 l5,3 l-5,4 h-12z" fill="#6a6a6a"/>
<path d="M890,376 l5,-3 l12,0 l5,3 l-5,4 h-12z" fill="#6a6a6a"/>

</svg>
</div>
<!-- RIGHT PANEL -->
<div class="a" style="left:958px;top:104px;width:194px;height:716px;background:#474747"></div>
<div class="a" style="left:958px;top:104px;width:2px;height:716px;background:#505050"></div>
<div class="a" style="left:959px;top:105px;width:193px;height:25px;background:linear-gradient(#505050,#444)"></div>
<svg class="ic" style="left:963px;top:108px" width="190" height="22">
<path d="M2,8 q2,-6 8,-5 q6,2 2,8 l-4,9 l-1,-7 z" fill="#f08010"/><path d="M9,2 h6 v6 h-4z" fill="#3aa0e8"/>
<path d="M27,8 h12 l-1,-5 l5,3 v14 h-16z" fill="#3aa0e8"/><rect x="29" y="12" width="12" height="2" fill="#e0e0e0"/>
<rect x="53" y="2" width="14" height="17" fill="#3aa0e8"/><path d="M56,5 l8,5 l-8,5z" fill="#a0d8f8"/>
<rect x="79" y="6" width="22" height="12" fill="#3aa0e8"/><rect x="81" y="9" width="14" height="3" fill="#f0c050"/><rect x="89" y="3" width="10" height="5" fill="#60b8f0"/>
<path d="M108,16 q8,-8 16,0 v4 h-16z" fill="#c8c0b8"/><path d="M116,2 v14" stroke="#e0e0e0" stroke-width="2"/><path d="M113,4 h7" stroke="#e04040" stroke-width="2"/>
<rect x="138" y="12" width="14" height="7" fill="#c8c8c8"/><path d="M141,2 h9 M145,2 v10" stroke="#f0f0f0" stroke-width="2"/>
<path d="M165,8 h14 M172,2 v16 M168,18 l3,-8 M176,18 l-3,-8" stroke="#f0f0f0" stroke-width="1.8"/>
</svg>
<div class="a" style="left:959px;top:129px;width:193px;height:24px;background:#3e3e3e"></div>
<div class="btn" style="left:963px;top:130px;width:23px;height:22px;background:#555"></div>
<div class="a" style="left:967px;top:134px;width:14px;height:14px;background:#3a8ed8;border:1px solid #8ac8f0"></div>
<div class="btn" style="left:988px;top:130px;width:24px;height:22px;background:#555"></div>
<svg class="ic" style="left:992px;top:134px" width="16" height="14"><path d="M2,3 h12 M7,3 l2,9 M11,3 v3" stroke="#f0f0f0" stroke-width="1.8" fill="none"/></svg>
<div class="btn" style="left:1016px;top:130px;width:24px;height:22px;background:#555"></div>
<svg class="ic" style="left:1020px;top:133px" width="16" height="16"><path d="M1,8 h14 M8,1 v14" stroke="#e8e8e8" stroke-width="1.6"/></svg>
<div class="a" style="left:1042px;top:130px;width:110px;height:22px;background:linear-gradient(90deg,#5a5a5a,#4e4e4e 30%,#4a4a4a)"></div>
<div class="a" style="left:963px;top:155px;width:156px;height:19px;background:linear-gradient(#b8b8b8,#9a9a9a);border:1px solid #333"></div>
<div class="t" style="left:970px;top:159px;color:#f4f4f4">ЁЖА</div>
<div class="btn" style="left:1122px;top:155px;width:20px;height:19px;background:linear-gradient(#777,#5a5a5a)"></div>
<div class="t" style="left:1128px;top:159px;color:#111;font-size:10px">+</div>
<!-- table rows -->
<div class="a" style="left:963px;top:177px;width:168px;height:152px;background:#3a3a3a"></div>
<div class="a" style="left:963px;top:177px;width:56px;height:18px;background:linear-gradient(#4e4e4e,#444);border:1px solid #383838"></div>
<div class="t" style="left:983px;top:181px;font-size:10px">ЁЖ</div>
<div class="a" style="left:1020px;top:177px;width:111px;height:18px;background:#474747;border:1px solid #383838"></div>
<div class="a" style="left:1024px;top:180px;width:13px;height:12px;background:#c8a040;border:1px solid #333"></div>
<div class="a" style="left:1039px;top:178px;width:91px;height:16px;background:#4a4a4a"></div>
<div class="t" style="left:1042px;top:181px;font-size:10px">ЖЁ</div>
<div class="a" style="left:1117px;top:179px;width:12px;height:14px;background:#b0b0b0;border-radius:0 6px 6px 0"></div><div class="a" style="left:1120px;top:182px;width:0;height:0;border-left:6px solid #333;border-top:4px solid transparent;border-bottom:4px solid transparent"></div>
<div class="a" style="left:963px;top:196px;width:56px;height:18px;background:linear-gradient(#4e4e4e,#444);border:1px solid #383838"></div>
<div class="t" style="left:983px;top:200px;font-size:10px">ЁЖ</div>
<div class="a" style="left:1020px;top:196px;width:111px;height:18px;background:#474747;border:1px solid #383838"></div>
<div class="a" style="left:1024px;top:199px;width:13px;height:12px;background:#5a5a5a;border:1px solid #333"></div>
<div class="a" style="left:1039px;top:197px;width:91px;height:16px;background:#4a4a4a"></div>
<div class="t" style="left:1042px;top:200px;font-size:10px">ЖЁ</div>
<div class="a" style="left:963px;top:215px;width:56px;height:18px;background:linear-gradient(#4e4e4e,#444);border:1px solid #383838"></div>
<div class="t" style="left:983px;top:219px;font-size:10px">ЁЖ</div>
<div class="a" style="left:1020px;top:215px;width:111px;height:18px;background:#474747;border:1px solid #383838"></div>
<div class="a" style="left:1024px;top:218px;width:13px;height:12px;background:#d8d8d8;border:1px solid #333"></div>
<div class="a" style="left:1039px;top:216px;width:91px;height:16px;background:#3a3a3a"></div>
<div class="t" style="left:1042px;top:219px;font-size:10px">ЖЁ-А</div>
<div class="a" style="left:1117px;top:217px;width:12px;height:14px;background:#b0b0b0;border-radius:0 6px 6px 0"></div><div class="a" style="left:1120px;top:220px;width:0;height:0;border-left:6px solid #333;border-top:4px solid transparent;border-bottom:4px solid transparent"></div>
<div class="a" style="left:963px;top:234px;width:56px;height:18px;background:linear-gradient(#4e4e4e,#444);border:1px solid #383838"></div>
<div class="t" style="left:977px;top:238px;font-size:10px">ЖЁЖ</div>
<div class="a" style="left:1020px;top:234px;width:111px;height:18px;background:#474747;border:1px solid #383838"></div>
<div class="a" style="left:1024px;top:237px;width:13px;height:12px;background:#5a5a5a;border:1px solid #333"></div>
<div class="a" style="left:1039px;top:235px;width:91px;height:16px;background:#4a4a4a"></div>
<div class="t" style="left:1042px;top:238px;font-size:10px">ЁЖЁ</div>
<div class="a" style="left:963px;top:253px;width:56px;height:18px;background:linear-gradient(#4e4e4e,#444);border:1px solid #383838"></div>
<div class="t" style="left:983px;top:257px;font-size:10px">Ж</div>
<div class="a" style="left:1020px;top:253px;width:111px;height:18px;background:#474747;border:1px solid #383838"></div>
<div class="a" style="left:1024px;top:256px;width:13px;height:12px;background:#e0e0e0;border:1px solid #333"></div>
<div class="a" style="left:1040px;top:255px;width:59px;height:15px;background:#383838;border:1px solid #555"></div>
<div class="a" style="left:1102px;top:255px;width:27px;height:15px;background:#383838;border:1px solid #555"></div>
<div class="a" style="left:963px;top:272px;width:56px;height:18px;background:linear-gradient(#4e4e4e,#444);border:1px solid #383838"></div>
<div class="t" style="left:983px;top:276px;font-size:10px">Ж</div>
<div class="a" style="left:1020px;top:272px;width:111px;height:18px;background:#474747;border:1px solid #383838"></div>
<div class="a" style="left:1024px;top:275px;width:13px;height:12px;background:#5a5a5a;border:1px solid #333"></div>
<div class="a" style="left:1039px;top:273px;width:91px;height:16px;background:#4a4a4a"></div>
<div class="t" style="left:1042px;top:276px;font-size:10px">ЖЁЖЁ</div>
<div class="a" style="left:963px;top:291px;width:56px;height:18px;background:linear-gradient(#4e4e4e,#444);border:1px solid #383838"></div>
<div class="t" style="left:977px;top:295px;font-size:10px">ЖЁЖ</div>
<div class="a" style="left:1020px;top:291px;width:111px;height:18px;background:#474747;border:1px solid #383838"></div>
<div class="a" style="left:1024px;top:294px;width:13px;height:12px;background:#e0e0e0;border:1px solid #333"></div>
<div class="a" style="left:1039px;top:292px;width:91px;height:16px;background:#5e5e5e"></div>
<div class="a" style="left:1117px;top:293px;width:12px;height:14px;background:#b0b0b0;border-radius:0 6px 6px 0"></div><div class="a" style="left:1120px;top:296px;width:0;height:0;border-left:6px solid #333;border-top:4px solid transparent;border-bottom:4px solid transparent"></div>
<div class="a" style="left:963px;top:310px;width:56px;height:18px;background:linear-gradient(#4e4e4e,#444);border:1px solid #383838"></div>
<div class="t" style="left:983px;top:314px;font-size:10px">ЁЖ</div>
<div class="a" style="left:1020px;top:310px;width:111px;height:18px;background:#474747;border:1px solid #383838"></div>
<div class="a" style="left:1024px;top:313px;width:13px;height:12px;background:#e0e0e0;border:1px solid #333"></div>
<div class="a" style="left:1039px;top:311px;width:91px;height:16px;background:#5e5e5e"></div>
<div class="a" style="left:1117px;top:312px;width:12px;height:14px;background:#b0b0b0;border-radius:0 6px 6px 0"></div><div class="a" style="left:1120px;top:315px;width:0;height:0;border-left:6px solid #333;border-top:4px solid transparent;border-bottom:4px solid transparent"></div>
<div class="a" style="left:1131px;top:177px;width:13px;height:150px;background:linear-gradient(90deg,#7a7a7a,#8a8a8a);border:1px solid #444"></div><div class="a" style="left:1132px;top:178px;width:11px;height:16px;background:#9a9a9a"></div>
<div class="t" style="left:966px;top:334px;font-size:11px">ЁЖ</div>
<div class="a" style="left:1003px;top:333px;width:121px;height:14px;background:linear-gradient(90deg,#3a3a3a,#565656 30%,#5a5a5a 70%,#3a3a3a);border:1px solid #2a2a2a;border-radius:2px"></div>
<div class="a" style="left:960px;top:354px;width:183px;height:183px;background:#4a4a4a;border:1px solid #a8a8a8"></div>
<svg class="ic" style="left:984px;top:537px" width="130" height="14"><path d="M1,6 h8 M5,2 v9" stroke="#e0e0e0" stroke-width="1.5"/><rect x="10" y="3" width="9" height="9" fill="#777"/><path d="M51,6 h8 M55,2 v9" stroke="#e0e0e0" stroke-width="1.5"/><rect x="60" y="3" width="9" height="9" fill="#777"/><path d="M113,3 h10 l-5,8z" fill="#e0e0e0"/></svg>
<div class="a" style="left:959px;top:558px;width:193px;height:1px;background:#333"></div>
<svg class="ic" style="left:962px;top:562px" width="16" height="16"><rect x="1" y="2" width="13" height="12" fill="#e8d8b0"/><path d="M3,4 l8,4 l-8,4z" fill="#3aa0e8"/></svg>
<div class="t" style="left:979px;top:565px;font-size:10px">ЖЁЖ</div>
<div class="a" style="left:1017px;top:561px;width:88px;height:17px;background:#2a2a2a;border:1px solid #444"></div>
<div class="t" style="left:1046px;top:565px;font-size:10px;color:#e8f0f8">ЙЖЁ</div>
<div class="a" style="left:1110px;top:559px;width:1px;height:22px;background:#333"></div>
<svg class="ic" style="left:1114px;top:562px" width="32" height="16"><path d="M2,9 h8" stroke="#c8c8c8" stroke-width="2"/><rect x="14" y="2" width="14" height="13" fill="#f0a050"/><rect x="17" y="5" width="8" height="7" fill="#f8d8a0"/></svg>
<div class="a" style="left:959px;top:582px;width:193px;height:1px;background:#333"></div>
<div class="a" style="left:964px;top:585px;width:55px;height:17px;background:linear-gradient(#7a7a7a,#686868);border:1px solid #333"></div>
<div class="t" style="left:970px;top:589px;font-size:10px">ЁЖЁ</div>
<svg class="ic" style="left:1129px;top:587px" width="12" height="12"><path d="M11,1 L1,6 L11,11z" fill="#f0f0f0"/></svg>
<div class="a" style="left:964px;top:607px;width:181px;height:18px;background:linear-gradient(#a4a4a4,#8a8a8a);border:1px solid #333"></div>
<div class="t" style="left:970px;top:611px;font-size:10px;color:#f4f4f4">► ЁЖЁЖ</div>
<div class="a" style="left:959px;top:628px;width:193px;height:1px;background:#3a3a3a"></div>
<div class="a" style="left:961px;top:634px;width:53px;height:17px;background:#333"></div>
<div class="t" style="left:966px;top:637px;font-size:11px;color:#e8f0f8">ЁЖ</div>
<div class="a" style="left:968px;top:656px;width:174px;height:155px;background:#474747;border:1px solid #2e2e2e"></div>
<div class="a" style="left:969px;top:657px;width:172px;height:17px;background:#3e3e3e;border-bottom:1px solid #333"></div>
<div class="a" style="left:969px;top:657px;width:9px;height:16px;background:#2a2a2a"></div>
<div class="a" style="left:995px;top:657px;width:1px;height:17px;background:#555"></div>
<div class="t" style="left:1024px;top:661px;font-size:10px">ЖЁЖ</div>
<div class="t" style="left:1073px;top:661px;font-size:10px">Ж</div>
<svg class="ic" style="left:984px;top:679px" width="20" height="36"><path d="M2,12 l8,-10 l3,3 l-2,7z" fill="#e0e0e0"/><path d="M2,30 l10,-8 v10z" fill="#e0e0e0"/></svg>
<div class="t" style="left:1008px;top:681px;font-size:10px">Ж</div>
<div class="t" style="left:1008px;top:702px;font-size:10px">Ж</div>
<div class="a" style="left:1022px;top:677px;width:18px;height:18px;background:linear-gradient(#ddd,#888);border:1px solid #333"></div>
<div class="a" style="left:1040px;top:677px;width:98px;height:18px;background:#5a5a5a"></div>
<div class="t" style="left:1044px;top:681px;font-size:10px">ЖЁЖЁЖЁ</div>
<div class="a" style="left:1022px;top:697px;width:18px;height:19px;background:linear-gradient(#ddd,#999);border:1px solid #333"></div>
<div class="a" style="left:1040px;top:697px;width:98px;height:19px;background:#7a7a7a"></div>
<div class="t" style="left:1044px;top:702px;font-size:10px">ЖЁЖЁ</div>
<div class="t" style="left:979px;top:723px;font-size:10px">ЖЁЖЁ</div>
<div class="a" style="left:1023px;top:719px;width:15px;height:17px;background:#4a90d0"></div>
<div class="a" style="left:1027px;top:724px;width:6px;height:6px;border-radius:3px;background:#f07020"></div>
<div class="a" style="left:1042px;top:719px;width:83px;height:17px;background:#353535;border:1px solid #555"></div>
<div class="t" style="left:1046px;top:723px;font-size:10px">ЁЖ</div>
<svg class="ic" style="left:1129px;top:722px" width="10" height="12"><path d="M2,1 l6,5 l-6,5" stroke="#f0f0f0" stroke-width="2" fill="none"/></svg>
<svg class="ic" style="left:972px;top:741px" width="12" height="50"><rect x="1" y="1" width="8" height="10" fill="none" stroke="#ddd" stroke-width="1.3"/><rect x="1" y="17" width="8" height="10" fill="none" stroke="#ddd" stroke-width="1.3"/><rect x="1" y="38" width="8" height="10" fill="none" stroke="#ddd" stroke-width="1.3"/></svg>
<div class="t" style="left:987px;top:742px;font-size:10px">ЁЖЁ</div>
<div class="t" style="left:987px;top:762px;font-size:10px">ЁЬЖ</div>
<div class="a" style="left:1020px;top:757px;width:118px;height:18px;background:#474747;border:1px solid #2e2e2e"></div>
<div class="t" style="left:987px;top:780px;font-size:10px">Ё ЖЁЖЁ Ж</div>
<!-- TIMELINE -->
<div class="a" style="left:33px;top:775px;width:925px;height:17px;background:linear-gradient(#585858,#4c4c4c)"></div>
<div class="a" style="left:37px;top:773px;width:144px;height:18px;background:#505050;border:1px solid #3a3a3a"></div>
<svg class="ic" style="left:39px;top:775px" width="140" height="14"><circle cx="7" cy="7" r="5" fill="none" stroke="#90b8d8" stroke-width="1.4"/><rect x="17" y="4" width="10" height="6" fill="#707070"/><rect x="30" y="4" width="14" height="6" fill="#6a6a6a"/><circle cx="52" cy="7" r="4.5" fill="#f0a020"/><rect x="58" y="3" width="16" height="8" fill="#7a7a7a"/><rect x="76" y="4" width="12" height="6" fill="#6a6a6a"/><rect x="92" y="3" width="10" height="8" fill="#777"/><path d="M106,8 h10 M110,4 h3" stroke="#d0d0d0" stroke-width="2"/><rect x="120" y="3" width="3" height="8" fill="#c0c0c0"/><rect x="125" y="4" width="2" height="7" fill="#c0c0c0"/></svg>
<div class="a" style="left:181px;top:772px;width:2px;height:20px;background:#3a3a3a"></div>
<div class="a" style="left:37px;top:791px;width:918px;height:28px;background:#3a3a3a"></div>
<div class="a" style="left:37px;top:792px;width:53px;height:26px;background:#4e4e4e;border:1px solid #333"></div>
<svg class="ic" style="left:40px;top:796px" width="16" height="16"><path d="M2,2 l4,3 h4 l2,-3 M3,13 q6,-10 10,0" stroke="#f0f0f0" stroke-width="1.6" fill="none"/></svg>
<div class="a" style="left:89px;top:792px;width:2px;height:26px;background:#e03010"></div>
<div class="a" style="left:92px;top:792px;width:863px;height:26px;background:#363636"></div>
<div class="a" style="left:96.0px;top:792px;width:1px;height:12px;background:#8a8a8a"></div>
<div class="a" style="left:105.8px;top:792px;width:1px;height:12px;background:#8a8a8a"></div>
<div class="a" style="left:115.6px;top:792px;width:1px;height:12px;background:#8a8a8a"></div>
<div class="a" style="left:125.3px;top:792px;width:1px;height:12px;background:#8a8a8a"></div>
<div class="a" style="left:135.1px;top:792px;width:1px;height:12px;background:#8a8a8a"></div>
<div class="a" style="left:144.9px;top:792px;width:1px;height:12px;background:#8a8a8a"></div>
<div class="a" style="left:154.7px;top:792px;width:1px;height:12px;background:#8a8a8a"></div>
<div class="a" style="left:164.5px;top:792px;width:1px;height:12px;background:#8a8a8a"></div>
<div class="a" style="left:174.2px;top:792px;width:1px;height:12px;background:#8a8a8a"></div>
<div class="a" style="left:184.0px;top:792px;width:1px;height:12px;background:#8a8a8a"></div>
<div class="a" style="left:193.8px;top:792px;width:1px;height:12px;background:#8a8a8a"></div>
<div class="a" style="left:203.6px;top:792px;width:1px;height:12px;background:#8a8a8a"></div>
<div class="a" style="left:213.4px;top:792px;width:1px;height:12px;background:#8a8a8a"></div>
<div class="a" style="left:223.1px;top:792px;width:1px;height:12px;background:#8a8a8a"></div>
<div class="a" style="left:232.9px;top:792px;width:1px;height:12px;background:#8a8a8a"></div>
<div class="a" style="left:242.7px;top:792px;width:1px;height:12px;background:#8a8a8a"></div>
<div class="a" style="left:252.5px;top:792px;width:1px;height:12px;background:#8a8a8a"></div>
<div class="a" style="left:262.3px;top:792px;width:1px;height:12px;background:#8a8a8a"></div>
<div class="a" style="left:272.0px;top:792px;width:1px;height:12px;background:#8a8a8a"></div>
<div class="a" style="left:281.8px;top:792px;width:1px;height:12px;background:#8a8a8a"></div>
<div class="a" style="left:291.6px;top:792px;width:1px;height:12px;background:#8a8a8a"></div>
<div class="a" style="left:301.4px;top:792px;width:1px;height:12px;background:#8a8a8a"></div>
<div class="a" style="left:311.2px;top:792px;width:1px;height:12px;background:#8a8a8a"></div>
<div class="a" style="left:320.9px;top:792px;width:1px;height:12px;background:#8a8a8a"></div>
<div class="a" style="left:330.7px;top:792px;width:1px;height:12px;background:#8a8a8a"></div>
<div class="a" style="left:340.5px;top:792px;width:1px;height:12px;background:#8a8a8a"></div>
<div class="a" style="left:350.3px;top:792px;width:1px;height:12px;background:#8a8a8a"></div>
<div class="a" style="left:360.1px;top:792px;width:1px;height:12px;background:#8a8a8a"></div>
<div class="a" style="left:369.8px;top:792px;width:1px;height:12px;background:#8a8a8a"></div>
<div class="a" style="left:379.6px;top:792px;width:1px;height:12px;background:#8a8a8a"></div>
<div class="a" style="left:389.4px;top:792px;width:1px;height:12px;background:#8a8a8a"></div>
<div class="a" style="left:399.2px;top:792px;width:1px;height:12px;background:#8a8a8a"></div>
<div class="a" style="left:409.0px;top:792px;width:1px;height:12px;background:#8a8a8a"></div>
<div class="a" style="left:418.7px;top:792px;width:1px;height:12px;background:#8a8a8a"></div>
<div class="a" style="left:428.5px;top:792px;width:1px;height:12px;background:#8a8a8a"></div>
<div class="a" style="left:438.3px;top:792px;width:1px;height:12px;background:#8a8a8a"></div>
<div class="a" style="left:448.1px;top:792px;width:1px;height:12px;background:#8a8a8a"></div>
<div class="a" style="left:457.9px;top:792px;width:1px;height:12px;background:#8a8a8a"></div>
<div class="a" style="left:467.6px;top:792px;width:1px;height:12px;background:#8a8a8a"></div>
<div class="a" style="left:477.4px;top:792px;width:1px;height:12px;background:#8a8a8a"></div>
<div class="a" style="left:487.2px;top:792px;width:1px;height:12px;background:#8a8a8a"></div>
<div class="a" style="left:497.0px;top:792px;width:1px;height:12px;background:#8a8a8a"></div>
<div class="a" style="left:506.8px;top:792px;width:1px;height:12px;background:#8a8a8a"></div>
<div class="a" style="left:516.5px;top:792px;width:1px;height:12px;background:#8a8a8a"></div>
<div class="a" style="left:526.3px;top:792px;width:1px;height:12px;background:#8a8a8a"></div>
<div class="a" style="left:536.1px;top:792px;width:1px;height:12px;background:#8a8a8a"></div>
<div class="a" style="left:545.9px;top:792px;width:1px;height:12px;background:#8a8a8a"></div>
<div class="a" style="left:555.7px;top:792px;width:1px;height:12px;background:#8a8a8a"></div>
<div class="a" style="left:565.4px;top:792px;width:1px;height:12px;background:#8a8a8a"></div>
<div class="a" style="left:575.2px;top:792px;width:1px;height:12px;background:#8a8a8a"></div>
<div class="a" style="left:585.0px;top:792px;width:1px;height:12px;background:#8a8a8a"></div>
<div class="a" style="left:594.8px;top:792px;width:1px;height:12px;background:#8a8a8a"></div>
<div class="a" style="left:604.6px;top:792px;width:1px;height:12px;background:#8a8a8a"></div>
<div class="a" style="left:614.3px;top:792px;width:1px;height:12px;background:#8a8a8a"></div>
<div class="a" style="left:624.1px;top:792px;width:1px;height:12px;background:#8a8a8a"></div>
<div class="a" style="left:633.9px;top:792px;width:1px;height:12px;background:#8a8a8a"></div>
<div class="a" style="left:643.7px;top:792px;width:1px;height:12px;background:#8a8a8a"></div>
<div class="a" style="left:653.5px;top:792px;width:1px;height:12px;background:#8a8a8a"></div>
<div class="a" style="left:663.2px;top:792px;width:1px;height:12px;background:#8a8a8a"></div>
<div class="a" style="left:673.0px;top:792px;width:1px;height:12px;background:#8a8a8a"></div>
<div class="a" style="left:682.8px;top:792px;width:1px;height:12px;background:#8a8a8a"></div>
<div class="a" style="left:692.6px;top:792px;width:1px;height:12px;background:#8a8a8a"></div>
<div class="a" style="left:702.4px;top:792px;width:1px;height:12px;background:#8a8a8a"></div>
<div class="a" style="left:712.1px;top:792px;width:1px;height:12px;background:#8a8a8a"></div>
<div class="a" style="left:721.9px;top:792px;width:1px;height:12px;background:#8a8a8a"></div>
<div class="a" style="left:731.7px;top:792px;width:1px;height:12px;background:#8a8a8a"></div>
<div class="a" style="left:741.5px;top:792px;width:1px;height:12px;background:#8a8a8a"></div>
<div class="a" style="left:751.3px;top:792px;width:1px;height:12px;background:#8a8a8a"></div>
<div class="a" style="left:761.0px;top:792px;width:1px;height:12px;background:#8a8a8a"></div>
<div class="a" style="left:770.8px;top:792px;width:1px;height:12px;background:#8a8a8a"></div>
<div class="a" style="left:780.6px;top:792px;width:1px;height:12px;background:#8a8a8a"></div>
<div class="a" style="left:790.4px;top:792px;width:1px;height:12px;background:#8a8a8a"></div>
<div class="a" style="left:800.2px;top:792px;width:1px;height:12px;background:#8a8a8a"></div>
<div class="a" style="left:809.9px;top:792px;width:1px;height:12px;background:#8a8a8a"></div>
<div class="a" style="left:819.7px;top:792px;width:1px;height:12px;background:#8a8a8a"></div>
<div class="a" style="left:829.5px;top:792px;width:1px;height:12px;background:#8a8a8a"></div>
<div class="a" style="left:839.3px;top:792px;width:1px;height:12px;background:#8a8a8a"></div>
<div class="a" style="left:849.1px;top:792px;width:1px;height:12px;background:#8a8a8a"></div>
<div class="a" style="left:858.8px;top:792px;width:1px;height:12px;background:#8a8a8a"></div>
<div class="a" style="left:868.6px;top:792px;width:1px;height:12px;background:#8a8a8a"></div>
<div class="a" style="left:878.4px;top:792px;width:1px;height:12px;background:#8a8a8a"></div>
<div class="a" style="left:888.2px;top:792px;width:1px;height:12px;background:#8a8a8a"></div>
<div class="a" style="left:898.0px;top:792px;width:1px;height:12px;background:#8a8a8a"></div>
<div class="a" style="left:907.7px;top:792px;width:1px;height:12px;background:#8a8a8a"></div>
<div class="a" style="left:917.5px;top:792px;width:1px;height:12px;background:#8a8a8a"></div>
<div class="a" style="left:927.3px;top:792px;width:1px;height:12px;background:#8a8a8a"></div>
<div class="a" style="left:937.1px;top:792px;width:1px;height:12px;background:#8a8a8a"></div>
<div class="a" style="left:946.9px;top:792px;width:1px;height:12px;background:#8a8a8a"></div>
<div class="t" style="left:207px;top:806px;font-size:9px;color:#c8c8c8;font-weight:normal">8</div>
<div class="t" style="left:231px;top:806px;font-size:9px;color:#c8c8c8;font-weight:normal">16</div>
<div class="t" style="left:287px;top:806px;font-size:9px;color:#c8c8c8;font-weight:normal">16</div>
<div class="t" style="left:339px;top:806px;font-size:9px;color:#c8c8c8;font-weight:normal">16</div>
<div class="t" style="left:396px;top:806px;font-size:9px;color:#c8c8c8;font-weight:normal">16</div>
<div class="t" style="left:450px;top:806px;font-size:9px;color:#c8c8c8;font-weight:normal">16</div>
<div class="t" style="left:504px;top:806px;font-size:9px;color:#c8c8c8;font-weight:normal">16</div>
<div class="t" style="left:560px;top:806px;font-size:9px;color:#c8c8c8;font-weight:normal">16</div>
<div class="t" style="left:616px;top:806px;font-size:9px;color:#c8c8c8;font-weight:normal">16</div>
<div class="t" style="left:670px;top:806px;font-size:9px;color:#c8c8c8;font-weight:normal">16</div>
<div class="t" style="left:725px;top:806px;font-size:9px;color:#c8c8c8;font-weight:normal">16</div>
<div class="t" style="left:781px;top:806px;font-size:9px;color:#c8c8c8;font-weight:normal">16</div>
<div class="t" style="left:837px;top:806px;font-size:9px;color:#c8c8c8;font-weight:normal">16</div>
<div class="t" style="left:892px;top:806px;font-size:9px;color:#c8c8c8;font-weight:normal">16</div>
<div class="a" style="left:94px;top:805px;width:12px;height:12px;background:#666"></div>
<div class="a" style="left:138px;top:806px;width:12px;height:10px;background:#707070"></div>
<svg class="ic" style="left:930px;top:796px" width="14" height="14"><path d="M2,2 h6 l4,5 l-4,5 h-6z" fill="none" stroke="#ddd" stroke-width="1.3"/></svg>
<!-- STATUS -->
<div class="a" style="left:0;top:818px;width:1152px;height:46px;background:#474747"></div>
<div class="a" style="left:0;top:818px;width:1152px;height:1px;background:#2a2a2a"></div>
<div class="a" style="left:9px;top:821px;width:74px;height:19px;background:#ecccc8;border:1.5px solid #3a3a3a"></div>
<svg class="ic" style="left:13px;top:823px" width="14" height="14"><path d="M2,12 l8,-9 l2,2 l-8,8z" fill="#8a6a6a"/></svg>
<div class="a" style="left:87px;top:819px;width:3px;height:22px;background:#e8e8e8"></div>
<div class="a" style="left:91px;top:819px;width:420px;height:22px;background:#3e3e3e;border:1px solid #333"></div>
<div class="t" style="left:97px;top:825px;font-size:11px;letter-spacing:2px">►ЁЖЁЖ</div>
<div class="a" style="left:490px;top:822px;width:17px;height:16px;background:#4a4a4a;border:1px solid #555"></div>
<div class="a" style="left:511px;top:819px;width:1px;height:22px;background:#555"></div>
<svg class="ic" style="left:526px;top:821px" width="280" height="18">
<path d="M3,4 h10 q4,0 4,5 q0,5 -4,5 h-10 M13,9 h5" stroke="#ddd" stroke-width="1.6" fill="none"/>
<path d="M47,4 h14 v6 M50,4 v10 M55,7 v7" stroke="#ddd" stroke-width="1.6" fill="none"/>
<path d="M80,4 h14 l-7,10z" stroke="#ddd" stroke-width="1.6" fill="none"/>
<path d="M112,14 q2,-10 10,-8 l3,4" stroke="#ddd" stroke-width="1.6" fill="none"/><path d="M124,6 l3,6 l-6,-1z" fill="#ddd"/>
<path d="M151,4 v10 M151,4 h6 v5 h-6 M160,9 h7" stroke="#ddd" stroke-width="1.6" fill="none"/>
<path d="M185,3 l8,6 l-8,6z M193,3 l7,6 l-7,6z" fill="#ddd"/>
<rect x="213" y="3" width="10" height="4" fill="#ddd"/><rect x="213" y="10" width="10" height="4" fill="#ddd"/><rect x="226" y="6" width="9" height="5" fill="#aaa"/>
<path d="M250,2 l14,4 v8 l-12,-2z" fill="#888"/>
</svg>
<div class="a" style="left:812px;top:819px;width:1px;height:45px;background:#333"></div>
<div class="a" style="left:840px;top:843px;width:1px;height:21px;background:#333"></div>
<div class="a" style="left:881px;top:843px;width:1px;height:21px;background:#333"></div>
<div class="a" style="left:928px;top:843px;width:1px;height:21px;background:#333"></div>
<svg class="ic" style="left:818px;top:823px" width="20" height="14"><path d="M2,7 h8 q4,0 4,-4 M10,7 q4,0 4,4 M14,3 l3,2" stroke="#ddd" stroke-width="2" fill="none"/></svg>
<div class="a" style="left:840px;top:822px;width:137px;height:17px;background:linear-gradient(90deg,#5a5a5a,#5a5a5a 11%,#c4c4c4 11%,#b4b4b4);border:1px solid #333"></div>
<div class="t" style="left:862px;top:826px;font-size:10px;color:#eee">ЁЖ</div>
<div class="a" style="left:960px;top:822px;width:17px;height:17px;background:#8a8a8a;border:1px solid #333"></div>
<div class="a" style="left:967px;top:829px;width:3px;height:3px;background:#111"></div>
<div class="a" style="left:980px;top:819px;width:1px;height:45px;background:#333"></div>
<svg class="ic" style="left:985px;top:822px" width="165" height="18">
<rect x="1" y="3" width="16" height="12" fill="#f0f0f0"/><path d="M5,6 v7 M9,9 h5 v4" stroke="#222" stroke-width="1.5"/>
<path d="M20,4 q6,-3 8,3 l-3,8 h-3z" fill="#f0f0f0"/><path d="M30,6 l6,-2 v10 l-6,-2z" fill="#f0f0f0"/>
<rect x="55" y="3" width="22" height="13" fill="#f0f0f0"/><path d="M60,6 h9 v7 h-9z" stroke="#333" stroke-width="1.5" fill="none"/><rect x="70" y="9" width="8" height="7" fill="#aaa"/>
<path d="M88,14 l3,-9 l5,-3 l5,4 v8" stroke="#f0f0f0" stroke-width="1.8" fill="none"/><rect x="86" y="10" width="4" height="4" fill="#e8a020"/>
<rect x="102" y="6" width="11" height="7" fill="#4a90d0"/>
<path d="M128,7 q5,-5 8,0 q2,5 -6,6" stroke="#f0f0f0" stroke-width="1.8" fill="none"/><rect x="139" y="3" width="4" height="5" fill="#f0a020"/><path d="M144,13 l3,-8 l3,8" stroke="#3aa0e8" stroke-width="2" fill="none"/><path d="M153,3 l5,10" stroke="#f0f0f0" stroke-width="2"/>
</svg>
<div class="a" style="left:0;top:841px;width:1152px;height:2px;background:#2e2e2e"></div>
<div class="a" style="left:2px;top:843px;width:88px;height:21px;background:#fbfbfb"></div>
<div class="t" style="left:10px;top:847px;color:#111;font-size:12px;font-weight:bold;letter-spacing:1.2px">ЫЖЁЖЁЖ &nbsp;↑</div>
<div class="a" style="left:91px;top:843px;width:154px;height:21px;background:#4a4a4a;border-left:1px solid #333"></div>
<div class="t" style="left:104px;top:847px;font-size:11px;font-weight:bold;color:#f0f0f0;letter-spacing:1.6px">ЖЁЖЁЖЁ ЁЖ &nbsp;ЁЖЁЖ</div>
<div class="a" style="left:245px;top:843px;width:1px;height:21px;background:#2e2e2e"></div>
<div class="a" style="left:246px;top:843px;width:454px;height:21px;background:#474747"></div>
<div class="a" style="left:703px;top:845px;width:70px;height:18px;background:#3a3a3a;border:1px solid #2a2a2a"></div>
<div class="a" style="left:718px;top:851px;width:5px;height:5px;border-radius:3px;border:1px solid #999"></div>
<div class="t" style="left:738px;top:848px;font-size:11px">ЁЖ</div>
<div class="a" style="left:779px;top:851px;width:25px;height:6px;background:#222;border:1px solid #666"></div>
<svg class="ic" style="left:818px;top:845px" width="16" height="16"><path d="M1,8 h14 M8,1 v14" stroke="#e0e0e0" stroke-width="1.6"/></svg>
<div class="t" style="left:848px;top:848px;font-size:12px;color:#3aa0e8">ЖП</div>
<div class="t" style="left:891px;top:848px;font-size:11px;color:#3aa0e8">ЁЖ</div>

<div class="t" style="left:943px;top:848px;font-size:11px;color:#e0e0e0">ЁЖ</div>
<div class="a" style="left:980px;top:843px;width:1px;height:21px;background:#333"></div>
<div class="t" style="left:996px;top:848px;font-size:11px;letter-spacing:2px">ЁЖЖЁ</div>
<div class="a" style="left:1064px;top:819px;width:1px;height:45px;background:#333"></div>
<svg class="ic" style="left:1068px;top:845px" width="84" height="18"><rect x="3" y="3" width="9" height="12" fill="none" stroke="#f0a020" stroke-width="2"/><path d="M20,12 h10 M30,6 v6" stroke="#ddd" stroke-width="1.8"/><rect x="36" y="8" width="5" height="5" fill="#ddd"/><circle cx="56" cy="6" r="4" fill="#f07020"/><path d="M63,2 h8 v6 h6 v8 h-14z" fill="#3aa0e8"/><rect x="66" y="10" width="6" height="5" fill="#e0e0e0"/></svg>
</body></html>
